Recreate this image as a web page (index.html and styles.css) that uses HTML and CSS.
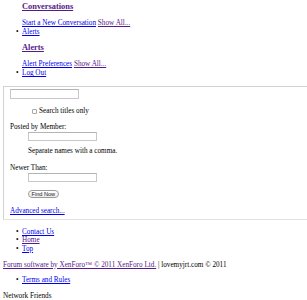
FILE: index.html
```html
<!DOCTYPE html>
<html>
<head>
<meta charset="utf-8">
<title>Search</title>
<link rel="stylesheet" href="styles.css">
</head>
<body>
<ul class="nav">
  <li class="nav-item nav-item--cut">
    <h3 class="pop-title pop-title--first"><a class="visited" href="#">Conversations</a></h3>
    <div class="pop-links"><a href="#">Start a New Conversation</a> <a class="visited" href="#">Show All...</a></div>
  </li>
  <li class="nav-item"><a href="#">Alerts</a>
    <h3 class="pop-title"><a class="visited" href="#">Alerts</a></h3>
    <div class="pop-links"><a href="#">Alert Preferences</a> <a class="visited" href="#">Show All...</a></div>
  </li>
  <li class="nav-item"><a href="#">Log Out</a></li>
</ul>

<form class="search">
  <input class="field" type="text">
  <label class="check"><input class="checkbox" type="checkbox"> Search titles only</label>
  <dl class="ctrl">
    <dt>Posted by Member:</dt>
    <dd class="ctrl-input"><input class="field field--small" type="text"></dd>
    <dd class="hint">Separate names with a comma.</dd>
  </dl>
  <dl class="ctrl ctrl--newer">
    <dt>Newer Than:</dt>
    <dd class="ctrl-input ctrl-input--newer"><input class="field field--small" type="text"></dd>
  </dl>
  <button class="button" type="button">Find Now</button>
  <a class="adv" href="#">Advanced search...</a>
</form>

<ul class="foot-links">
  <li><a href="#">Contact Us</a></li>
  <li><a class="visited" href="#">Home</a></li>
  <li><a href="#">Top</a></li>
</ul>
<div class="copyright"><a class="visited" href="#">Forum software by XenForo™ © 2011 XenForo Ltd.</a> | lovemyjrt.com © 2011</div>
<ul class="terms">
  <li><a href="#">Terms and Rules</a></li>
</ul>
<div class="friends">Network Friends</div>
</body>
</html>
```

FILE: styles.css
```css
html, body {
  background: #fff;
}
body {
  margin: 0;
  padding: 0 0 0 3px;
  font-family: "Liberation Serif", "Times New Roman", serif;
  font-size: 7.2px;
  line-height: 8.6px;
  color: #000;
  overflow: hidden;
}
a {
  color: #0000ee;
}
a.visited {
  color: #551a8b;
}
li::marker {
  content: "\2022\00a0\00a0";
}

.nav {
  margin: 0 0 8.3px;
  padding-left: 19px;
}
.nav-item--cut {
  list-style: none;
}
.nav-item--cut::marker {
  content: none;
}
.pop-title {
  margin: 7px 0 7px;
  font-size: 8.4px;
  line-height: 10px;
  font-weight: bold;
}
.pop-title--first {
  margin-top: 1.5px;
}
.pop-links {
  margin-bottom: 0.5px;
}

.search {
  margin: 0;
  padding: 2px 0 4px 6px;
  border: 1px solid #d2d2d2;
  border-right: 0;
  border-bottom-color: #e2e2e2;
}
.field {
  display: block;
  box-sizing: border-box;
  width: 69px;
  height: 10px;
  margin: 0;
  padding: 0;
  border: 1px solid #c8c8c8;
  border-top-color: #b4b4b4;
  background: #fff;
}
.field--small {
  height: 9px;
}
.check {
  display: flex;
  align-items: center;
  margin-top: 8px;
  padding-left: 21.5px;
  height: 8.6px;
}
.checkbox {
  appearance: none;
  -webkit-appearance: none;
  box-sizing: border-box;
  width: 5px;
  height: 5px;
  margin: 0 2.5px 0 0;
  border: 1px solid #a8a8a8;
  border-radius: 1px;
  background: #fff;
}
.ctrl {
  margin: 7px 0 0;
}
.ctrl dt {
  margin: 0;
}
.ctrl dd {
  margin: 0 0 0 18px;
}
.ctrl-input {
  padding-top: 0.7px;
}
.hint {
  padding-top: 6px;
}
.ctrl--newer {
  margin-top: 8px;
}
.ctrl-input--newer {
  padding-top: 1px;
}
.button {
  display: block;
  box-sizing: border-box;
  width: 30.7px;
  height: 8px;
  margin: 7.5px 0 0 18px;
  padding: 0;
  border: 1px solid #9a9a9a;
  border-radius: 4px;
  background: linear-gradient(#ffffff, #ececec);
  font-family: "Liberation Sans", Arial, sans-serif;
  font-size: 5.6px;
  line-height: 6px;
  color: #222;
}
.adv {
  display: block;
  margin-top: 9px;
  width: max-content;
}

.foot-links {
  margin: 7.4px 0 0;
  padding-left: 19px;
}
.copyright {
  margin-top: 7.2px;
}
.terms {
  margin: 7px 0 0;
  padding-left: 19px;
}
.friends {
  margin-top: 7.1px;
}
```
